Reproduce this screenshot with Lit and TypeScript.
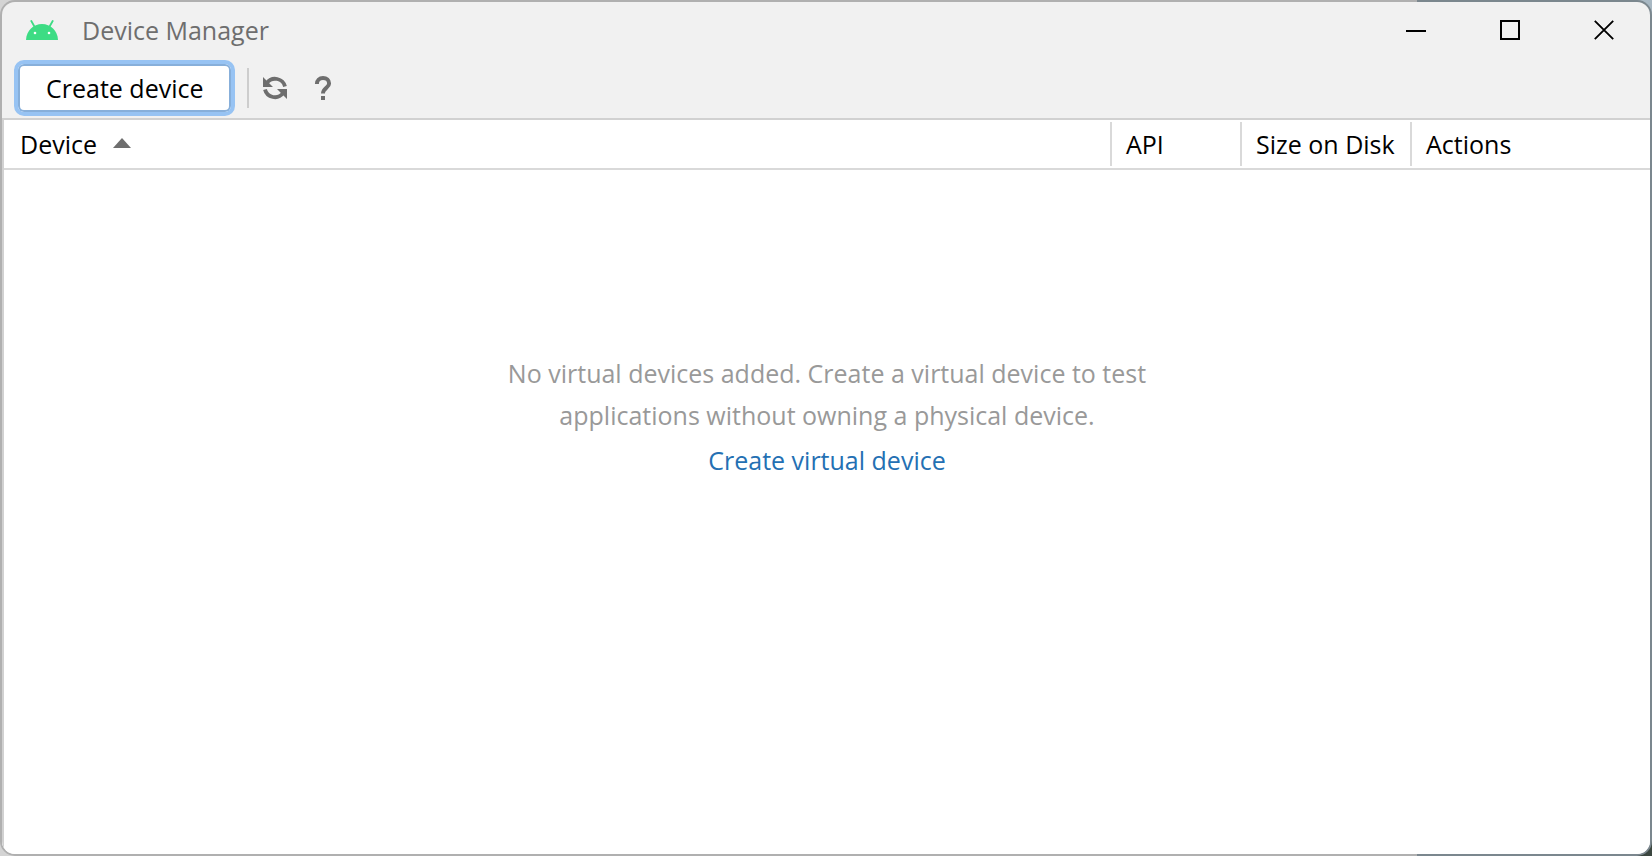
import { LitElement, html, css } from "lit";
import { customElement, property, state } from "lit/decorators.js";

@customElement("title-bar")
class TitleBar extends LitElement {
  @property() heading = "";

  static styles = css`
    :host { display: flex; align-items: center; height: 56px; padding: 0 0 0 24px; }
    .logo { display: block; width: 32px; height: 20px; }
    h1 { flex: 1; margin: 0 0 0 24px; font-size: 25px; line-height: 34px; font-weight: 400; color: #6e6e6e; }
    .controls { display: flex; gap: 2px; }
    button { display: grid; place-items: center; width: 92px; height: 56px; border: 0; padding: 0; background: none; }
    button:hover { background: #e2e2e2; }
    svg { display: block; }
  `;

  render() {
    return html`
      <svg class="logo" viewBox="0 0 32 20" aria-hidden="true">
        <path d="M0 20C.4 10.500 7.500 4 16 4s15.600 6.500 16 16z" fill="#3ddc84" />
        <path d="M5.300 1l3.400 6M26.700 1l-3.400 6" stroke="#3ddc84" stroke-width="1.800" stroke-linecap="round" />
        <circle cx="9" cy="13" r="1.300" fill="#fff" /><circle cx="23" cy="13" r="1.300" fill="#fff" />
      </svg>
      <h1>${this.heading}</h1>
      <div class="controls">
        <button aria-label="Minimize">
          <svg width="20" height="20"><path d="M0 11h20" stroke="#000" stroke-width="2" /></svg>
        </button>
        <button aria-label="Maximize">
          <svg width="20" height="20"><rect x="1" y="1" width="18" height="18" fill="none" stroke="#000" stroke-width="2" /></svg>
        </button>
        <button aria-label="Close">
          <svg width="20" height="20"><path d="M.8.8l18.400 18.400M19.200.8L.8 19.200" stroke="#000" stroke-width="1.900" /></svg>
        </button>
      </div>
    `;
  }
}

@customElement("device-toolbar")
class DeviceToolbar extends LitElement {
  static styles = css`
    :host { display: flex; align-items: center; height: 60px; padding: 0 12px; border-bottom: 2px solid #d1d1d1; }
    button { font: inherit; color: #000; padding: 0; border: 0; background: none; }
    .create { box-sizing: border-box; height: 56px; padding: 0 28px; border: 4px solid #97c3f3; border-radius: 10px;
      background: #fff; box-shadow: inset 0 0 0 2px #87afda; font-size: 25px; line-height: 34px; outline: none; }
    .divider { width: 2px; height: 40px; margin: 0 8px 0 12px; background: #cdcdcd; }
    .icon { display: grid; place-items: center; width: 36px; height: 36px; margin-right: 12px; border-radius: 6px; }
    .icon:hover { background: #dfdfdf; }
    svg { display: block; }
  `;

  render() {
    return html`
      <button class="create">Create device</button>
      <span class="divider"></span>
      <button class="icon" aria-label="Refresh">
        <svg width="26" height="24" viewBox="0 0 26 24">
          <path d="M5 6.800A10.200 10.200 0 0 1 23 10.500M21 17.200A10.200 10.200 0 0 1 3 13.500" fill="none" stroke="#6e6e6e" stroke-width="3.800" />
          <path d="M1 1v10h10zM25 23V13H15z" fill="#6e6e6e" />
        </svg>
      </button>
      <button class="icon" aria-label="Help">
        <svg width="18" height="24" viewBox="0 0 18 24">
          <path d="M2.900 8C2.900 4.200 5.400 2 9 2s6.100 2.200 6.100 5.400C15.100 11.600 9 12 9 17.600" fill="none" stroke="#6e6e6e" stroke-width="4" />
          <rect x="7" y="20" width="4" height="4" fill="#6e6e6e" />
        </svg>
      </button>
    `;
  }
}

@customElement("device-table")
class DeviceTable extends LitElement {
  @state() private ascending = true;

  static styles = css`
    :host { display: flex; flex-direction: column; flex: 1; border-left: 2px solid #d1d1d1; background: #fff; font-size: 25px; line-height: 34px; }
    table { width: 100%; border-collapse: separate; border-spacing: 0; table-layout: fixed; }
    th { padding: 2px 0; border-bottom: 2px solid #d9d9d9; text-align: left; font-weight: 400; color: #000; }
    .api { width: 130px; }
    .size { width: 170px; }
    .actions { width: 240px; }
    .cell { display: flex; align-items: center; box-sizing: border-box; height: 44px; padding-left: 14px; border-left: 2px solid #d9d9d9; white-space: nowrap; }
    .sort { display: flex; align-items: center; gap: 16px; height: 44px; padding: 0 0 0 16px; border: 0; background: none; font: inherit; color: inherit; }
    .sort svg { display: block; }
    .descending { transform: rotate(180deg); }
    .empty { padding-top: 182px; text-align: center; color: #999; }
    p { margin: 0; line-height: 42px; }
    a { display: inline-block; margin-top: 7px; color: #2470b3; text-decoration: none; }
  `;

  render() {
    return html`
      <table>
        <thead>
          <tr>
            <th scope="col" aria-sort=${this.ascending ? "ascending" : "descending"}>
              <button class="sort" @click=${() => (this.ascending = !this.ascending)}>
                Device
                <svg class=${this.ascending ? "" : "descending"} width="18" height="14"><path d="M0 11L9 1l9 10z" fill="#6e6e6e" /></svg>
              </button>
            </th>
            <th scope="col" class="api"><div class="cell">API</div></th>
            <th scope="col" class="size"><div class="cell">Size on Disk</div></th>
            <th scope="col" class="actions"><div class="cell">Actions</div></th>
          </tr>
        </thead>
      </table>
      <div class="empty">
        <p>No virtual devices added. Create a virtual device to test<br />applications without owning a physical device.</p>
        <a href="#create">Create virtual device</a>
      </div>
    `;
  }
}

@customElement("app-root")
class AppRoot extends LitElement {
  static styles = css`
    :host { display: flex; box-sizing: border-box; min-height: 100vh;
      font-family: "Open Sans", "Noto Sans", sans-serif;
      background: linear-gradient(to right, #d4d4d4 50%, transparent 50%), linear-gradient(#a9b9c4, #6b7b86 25%, #66757e 60%, #3b463f); }
    main { display: flex; flex-direction: column; flex: 1; box-sizing: border-box; overflow: hidden;
      border: 2px solid transparent; border-radius: 15px;
      background: linear-gradient(#f1f1f1, #f1f1f1) padding-box, linear-gradient(to right, #b0b0b0 1417px, #7b878e 1417px) border-box; }
  `;

  render() {
    return html`
      <main>
        <title-bar heading="Device Manager"></title-bar>
        <device-toolbar></device-toolbar>
        <device-table></device-table>
      </main>
    `;
  }
}
